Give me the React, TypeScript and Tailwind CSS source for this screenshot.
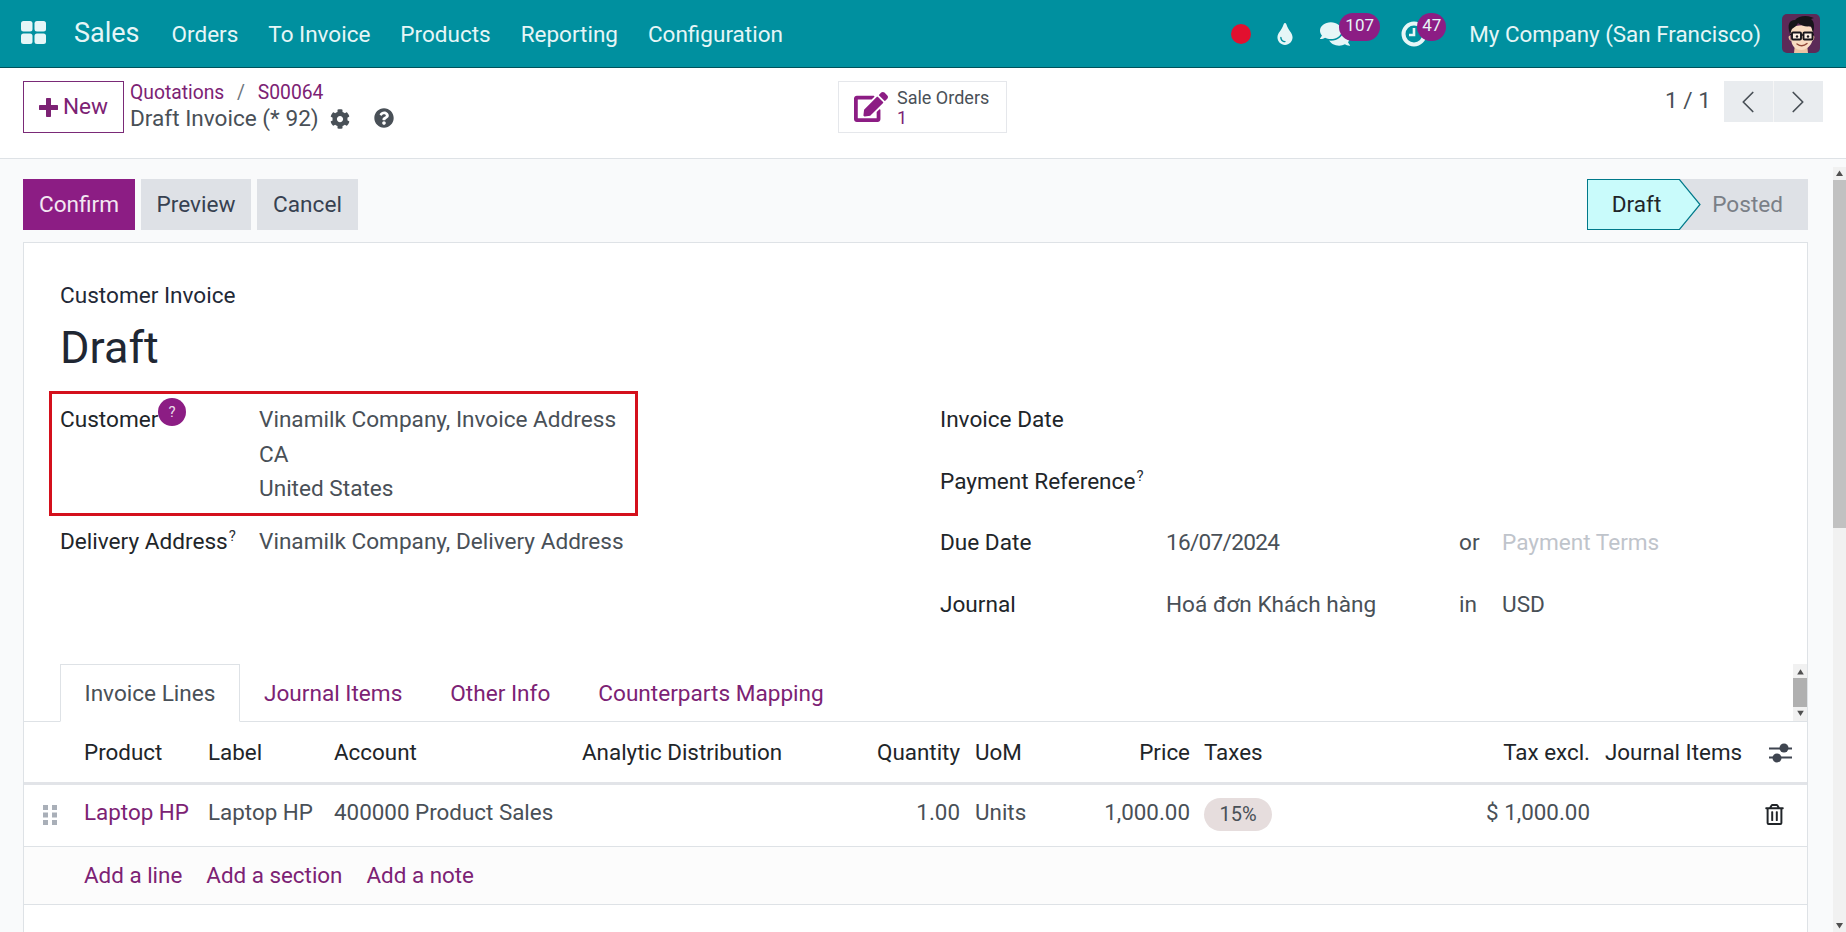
import React from "react";
import { FaCog, FaQuestionCircle, FaTint, FaComments, FaEdit, FaRegTrashAlt } from "react-icons/fa";
import { ChevronLeft, ChevronRight } from "lucide-react";

const Apps = () => (
  <svg width="25" height="23" viewBox="0 0 25 23" className="shrink-0">
    <rect x="0" y="0" width="11.5" height="10.5" rx="2.5" fill="#e6f6f7" />
    <rect x="13.5" y="0" width="11.5" height="10.5" rx="2.5" fill="#e6f6f7" />
    <rect x="0" y="12.5" width="11.5" height="10.5" rx="2.5" fill="#e6f6f7" />
    <rect x="13.5" y="12.5" width="11.5" height="10.5" rx="2.5" fill="#e6f6f7" />
  </svg>
);

const Plus = () => (
  <svg width="19" height="19" viewBox="0 0 19 19" className="shrink-0">
    <path d="M9.5 1.5v16M1.5 9.5h16" stroke="#7c2274" strokeWidth="5" strokeLinecap="round" />
  </svg>
);

const Avatar = () => (
  <svg width="38" height="39" viewBox="0 0 38 39" className="shrink-0">
    <rect width="38" height="39" rx="5" fill="#5c2a58" />
    <path d="M13 30h12l1 9H12z" fill="#ecc4a4" />
    <path d="M8 22c-2-1-2 4 1 5zM31 22c2-1 2 4-1 5z" fill="#ecc0a0" />
    <path d="M8.5 14c6-3 16-4 22 0 1 7 1 11-1 15-2 4-6 7-10 7-5 0-9-3-10-8-1-4-1-9-1-14z" fill="#f8dcc2" />
    <path d="M8 20C5 11 7 6 13 6c3-4 11-5 16-3l3 1-3 1c3 2 4 7 2 14l-2-7c-5 1-9 0-13-3-1 3-4 4-6 6-1 2-1 3-2 5z" fill="#17151a" />
    <rect x="10" y="18.5" width="9" height="7" rx="1" fill="#fff" fillOpacity="0.55" stroke="#17151a" strokeWidth="1.9" />
    <rect x="21.5" y="18.5" width="9" height="7" rx="1" fill="#fff" fillOpacity="0.55" stroke="#17151a" strokeWidth="1.9" />
    <path d="M19 21h2.5M8 20.5h2M30.5 20.5h1.5" stroke="#17151a" strokeWidth="1.5" />
    <circle cx="15" cy="22.5" r="1.2" fill="#17151a" />
    <circle cx="26" cy="22.5" r="1.2" fill="#17151a" />
    <path d="M15 30c3 2.2 7 2.2 10-.5" stroke="#8f4636" strokeWidth="1.4" fill="none" strokeLinecap="round" />
  </svg>
);

const ClockIcon = () => (
  <svg width="26" height="26" viewBox="0 0 26 26" className="shrink-0">
    <circle cx="13" cy="13" r="10.5" fill="none" stroke="#e6f6f7" strokeWidth="4" />
    <path d="M13 7v7h-5" fill="none" stroke="#e6f6f7" strokeWidth="2.6" />
  </svg>
);

const Handle = () => (
  <svg width="14" height="20" viewBox="0 0 14 20">
    {[0, 7.5, 15].map((y) => (
      <g key={y} fill="#a9afb8">
        <rect x="0" y={y} width="5" height="5" />
        <rect x="9" y={y} width="5" height="5" />
      </g>
    ))}
  </svg>
);

const Sliders = () => (
  <svg width="23" height="22" viewBox="0 0 23 22" className="block">
    <path d="M0 6.5h23M0 15.5h23" stroke="#3f4550" strokeWidth="2" />
    <circle cx="15" cy="6" r="4.5" fill="#3f4550" />
    <circle cx="8" cy="16" r="4.5" fill="#3f4550" />
  </svg>
);

const Arrow = ({ d }: { d: string }) => (
  <svg width="13" height="13" viewBox="0 0 13 13" className="block">
    <path d={d} fill="#505050" />
  </svg>
);

const Help = () => <sup className="text-[15px] text-[#2b3038] ml-px relative -top-[8px]">?</sup>;

const gridCols = "grid grid-cols-[60px_124px_126px_248px_248px_145px_95px_134px_266px_135px_155px_1fr] items-center text-[22.4px]";

export default function App() {
  return (
    <div className="w-[1846px] h-[932px] overflow-hidden flex flex-col bg-[#f9fafb] text-[22.6px] text-[#495057] font-['Roboto',sans-serif]">
      {/* navbar */}
      <header className="h-[68px] shrink-0 flex items-center bg-[#00909f] border-b border-[#00525b] text-[#e6f6f7]">
        <div className="ml-[21px] mb-[2px]"><Apps /></div>
        <span className="ml-[28px] text-[27px] leading-none mr-[17px]">Sales</span>
        <nav className="flex pt-[2px] text-[22.5px]">
          {["Orders", "To Invoice", "Products", "Reporting", "Configuration"].map((t) => (
            <span key={t} className="px-[15px] leading-none">{t}</span>
          ))}
        </nav>
        <div className="ml-auto flex items-center">
          <span className="w-[20px] h-[20px] rounded-full bg-[#e2102f] mr-[23px]" />
          <FaTint size={22} className="mr-[24px]" />
          <span className="relative mr-[51px] flex">
            <FaComments size={30} />
            <span className="absolute left-[19px] -top-[6px] w-[41px] h-[28px] rounded-full bg-[#8c1d84] text-[17px] leading-[24px] text-center">107</span>
          </span>
          <span className="relative mr-[42px] flex">
            <ClockIcon />
            <span className="absolute left-[16px] -top-[8px] w-[29px] h-[28px] rounded-full bg-[#8c1d84] text-[17px] leading-[24px] text-center">47</span>
          </span>
          <span className="leading-none mr-[21px] pt-[2px] text-[22.4px]">My Company (San Francisco)</span>
          <span className="mr-[26px]"><Avatar /></span>
        </div>
      </header>

      {/* control panel */}
      <div className="h-[91px] shrink-0 flex items-start bg-white border-b border-[#dee2e6] pt-[13px] pl-[23px] pr-[23px]">
        <button className="w-[101px] h-[52px] flex items-center justify-center gap-[5px] border border-[#7a2a77] text-[#7c2274]">
          <Plus />
          New
        </button>
        <div className="ml-[6px] w-[708px] -mt-[2px]">
          <div className="text-[19.3px] leading-[27px] text-[#7c2274]">
            Quotations <span className="text-[#6c757d] mx-[8px]">/</span> S00064
          </div>
          <div className="flex items-center leading-[28px] -mt-[1px] text-[#495057]">
            Draft Invoice (* 92)
            <FaCog size={20} className="ml-[11px] text-[#495057]" />
            <FaQuestionCircle size={20} className="ml-[24px] -mt-[2px] text-[#495057]" />
          </div>
        </div>
        <div className="w-[169px] h-[52px] flex items-center bg-white border border-[#e5e7eb] pl-[15px]">
          <FaEdit size={34} className="text-[#8c1d84] mr-[9px]" />
          <div className="text-[18px] leading-[20px] pt-[2px]">
            <div>Sale Orders</div>
            <div className="text-[#7c2274]">1</div>
          </div>
        </div>
        <div className="ml-auto flex items-center">
          <span className="mr-[13px] -mt-[2px]">1 / 1</span>
          <div className="flex h-[41px] w-[99px] bg-[#e9ecef]">
            <span className="w-1/2 flex items-center justify-center border-r border-[#f6f6f6]"><ChevronLeft size={38} strokeWidth={1.1} /></span>
            <span className="w-1/2 flex items-center justify-center"><ChevronRight size={38} strokeWidth={1.1} /></span>
          </div>
        </div>
      </div>

      {/* main */}
      <div className="flex-1 flex min-h-0">
        <main className="w-[1833px] pl-[23px] pr-[25px] pt-[20px] overflow-hidden">
          <div className="flex h-[51px] items-center">
            <button className="w-[112px] h-full bg-[#8c1d84] text-[#f3e7f2]">Confirm</button>
            <button className="w-[110px] h-full ml-[6px] bg-[#dee1e6] text-[#374151]">Preview</button>
            <button className="w-[101px] h-full ml-[6px] bg-[#dee1e6] text-[#374151]">Cancel</button>
            <div className="ml-auto flex h-full items-center">
              <div className="relative w-[92px] h-full bg-[#c9fbfb] border border-[#00798a] border-r-0 text-[#212529] flex items-center justify-center pl-[6px]">
                Draft
                <svg width="22" height="51" viewBox="0 0 22 51" className="absolute -right-[22px] -top-px z-10">
                  <path d="M0 0 L21 25.5 L0 51 Z" fill="#c9fbfb" />
                  <path d="M0 0 L21 25.5 L0 51" fill="none" stroke="#00798a" strokeWidth="1.2" />
                </svg>
              </div>
              <div className="w-[129px] h-full bg-[#dee1e6] text-[#7a7f87] flex items-center justify-end pr-[25px]">Posted</div>
            </div>
          </div>

          <section className="mt-[12px] h-[800px] bg-white border border-[#dee2e6] text-[#495057]">
            <div className="pl-[36px]">
              <div className="pt-[35px] leading-[36px] text-[#1f2937]">Customer Invoice</div>
              <div className="mt-[3px] text-[45px] leading-[62px] text-[#1f2733]">Draft</div>

              <div className="flex h-[277px] mt-[8px]">
                <div className="w-[880px] pt-[4px]">
                  <div className="-ml-[11px] w-[589px] border-[3px] border-[#d4101c] pl-[8px] pt-[9px] pb-[6px] flex">
                    <div className="w-[199px] leading-[34.7px] text-[#212529] relative">
                      Customer
                      <span className="absolute left-[98px] -top-[5px] w-[28px] h-[28px] rounded-full bg-[#8c1d84] text-[#eadcea] text-[15px] leading-[28px] text-center">?</span>
                    </div>
                    <div className="leading-[34.7px]">
                      <div>Vinamilk Company, Invoice Address</div>
                      <div>CA</div>
                      <div>United States</div>
                    </div>
                  </div>
                  <div className="flex mt-[9px] leading-[34px]">
                    <div className="w-[199px] text-[#212529]">Delivery Address<Help /></div>
                    <div>Vinamilk Company, Delivery Address</div>
                  </div>
                </div>
                <div className="flex-1 pt-[2px]">
                  {[
                    ["Invoice Date", "", "", ""],
                    ["Payment Reference", "", "", ""],
                    ["Due Date", "16/07/2024", "or", "Payment Terms"],
                    ["Journal", "Hoá đơn Khách hàng", "in", "USD"],
                  ].map(([a, b, c, d]) => (
                    <div key={a} className="flex items-center h-[61.7px]">
                      <div className="w-[226px] text-[#212529]">{a}{a === "Payment Reference" && <Help />}</div>
                      <div className={b === "16/07/2024" ? "w-[293px] tracking-[-0.7px]" : "w-[293px]"}>{b}</div>
                      <div className="w-[43px]">{c}</div>
                      <div className={d === "Payment Terms" ? "text-[#bfc4cb]" : ""}>{d}</div>
                    </div>
                  ))}
                </div>
              </div>
            </div>

            {/* tabs */}
            <div className="flex h-[58px] border-b border-[#dee2e6] pl-[36px] items-end">
              <div className="h-[58px] -mb-px w-[180px] pt-[2px] flex items-center justify-center bg-white border border-[#dee2e6] border-b-white">Invoice Lines</div>
              {["Journal Items", "Other Info", "Counterparts Mapping"].map((t) => (
                <div key={t} className="h-[57px] pt-[2px] flex items-center px-[24px] text-[#7c2274]">{t}</div>
              ))}
              <div className="ml-auto w-[14px] h-[57px] bg-[#f1f1f1] flex flex-col items-center justify-between py-[2px]">
                <Arrow d="M6.5 3.5 L10 9 H3 Z" />
                <div className="w-full h-[30px] bg-[#b0b0b0]" />
                <Arrow d="M6.5 9.5 L3 4 H10 Z" />
              </div>
            </div>

            {/* table */}
            <div className={`${gridCols} h-[63px] pt-[2px] border-b-[3px] border-[#e2e4e8] text-[#212529]`}>
              <span />
              <span>Product</span>
              <span>Label</span>
              <span>Account</span>
              <span>Analytic Distribution</span>
              <span className="text-right pr-[15px]">Quantity</span>
              <span>UoM</span>
              <span className="text-right pr-[14px]">Price</span>
              <span>Taxes</span>
              <span className="text-right pr-[15px]">Tax excl.</span>
              <span>Journal Items</span>
              <span className="pl-[9px]"><Sliders /></span>
            </div>
            <div className={`${gridCols} h-[62px] border-b border-[#dee2e6] pb-[5px]`}>
              <span className="pl-[19px] pt-[3px]"><Handle /></span>
              <span className="text-[#7c2274]">Laptop HP</span>
              <span>Laptop HP</span>
              <span className="whitespace-nowrap">400000 Product Sales</span>
              <span />
              <span className="text-right pr-[15px]">1.00</span>
              <span>Units</span>
              <span className="text-right pr-[14px] whitespace-nowrap">1,000.00</span>
              <span className="pt-[1px]"><span className="inline-block w-[68px] h-[33px] rounded-full bg-[#e6dddd] text-[20px] leading-[33px] text-center">15%</span></span>
              <span className="text-right pr-[15px] whitespace-nowrap">$ 1,000.00</span>
              <span />
              <span className="pl-[4px] pt-[2px]"><FaRegTrashAlt size={21} className="text-[#212529]" /></span>
            </div>
            <div className="h-[58px] flex items-center gap-[24px] pl-[60px] bg-[#fcfcfc] border-b border-[#dee2e6] text-[#7c2274] text-[22.4px]">
              <span>Add a line</span>
              <span>Add a section</span>
              <span>Add a note</span>
            </div>
          </section>
        </main>

        <div className="w-[13px] shrink-0 mt-[8px] flex flex-col bg-[#f1f1f1]">
          <div className="h-[13px] flex items-center justify-center"><Arrow d="M6.5 3.5 L10 9 H3 Z" /></div>
          <div className="h-[348px] bg-[#c1c1c1]" />
          <div className="flex-1" />
          <div className="h-[13px] flex items-center justify-center"><Arrow d="M6.5 9.5 L3 4 H10 Z" /></div>
        </div>
      </div>
    </div>
  );
}
